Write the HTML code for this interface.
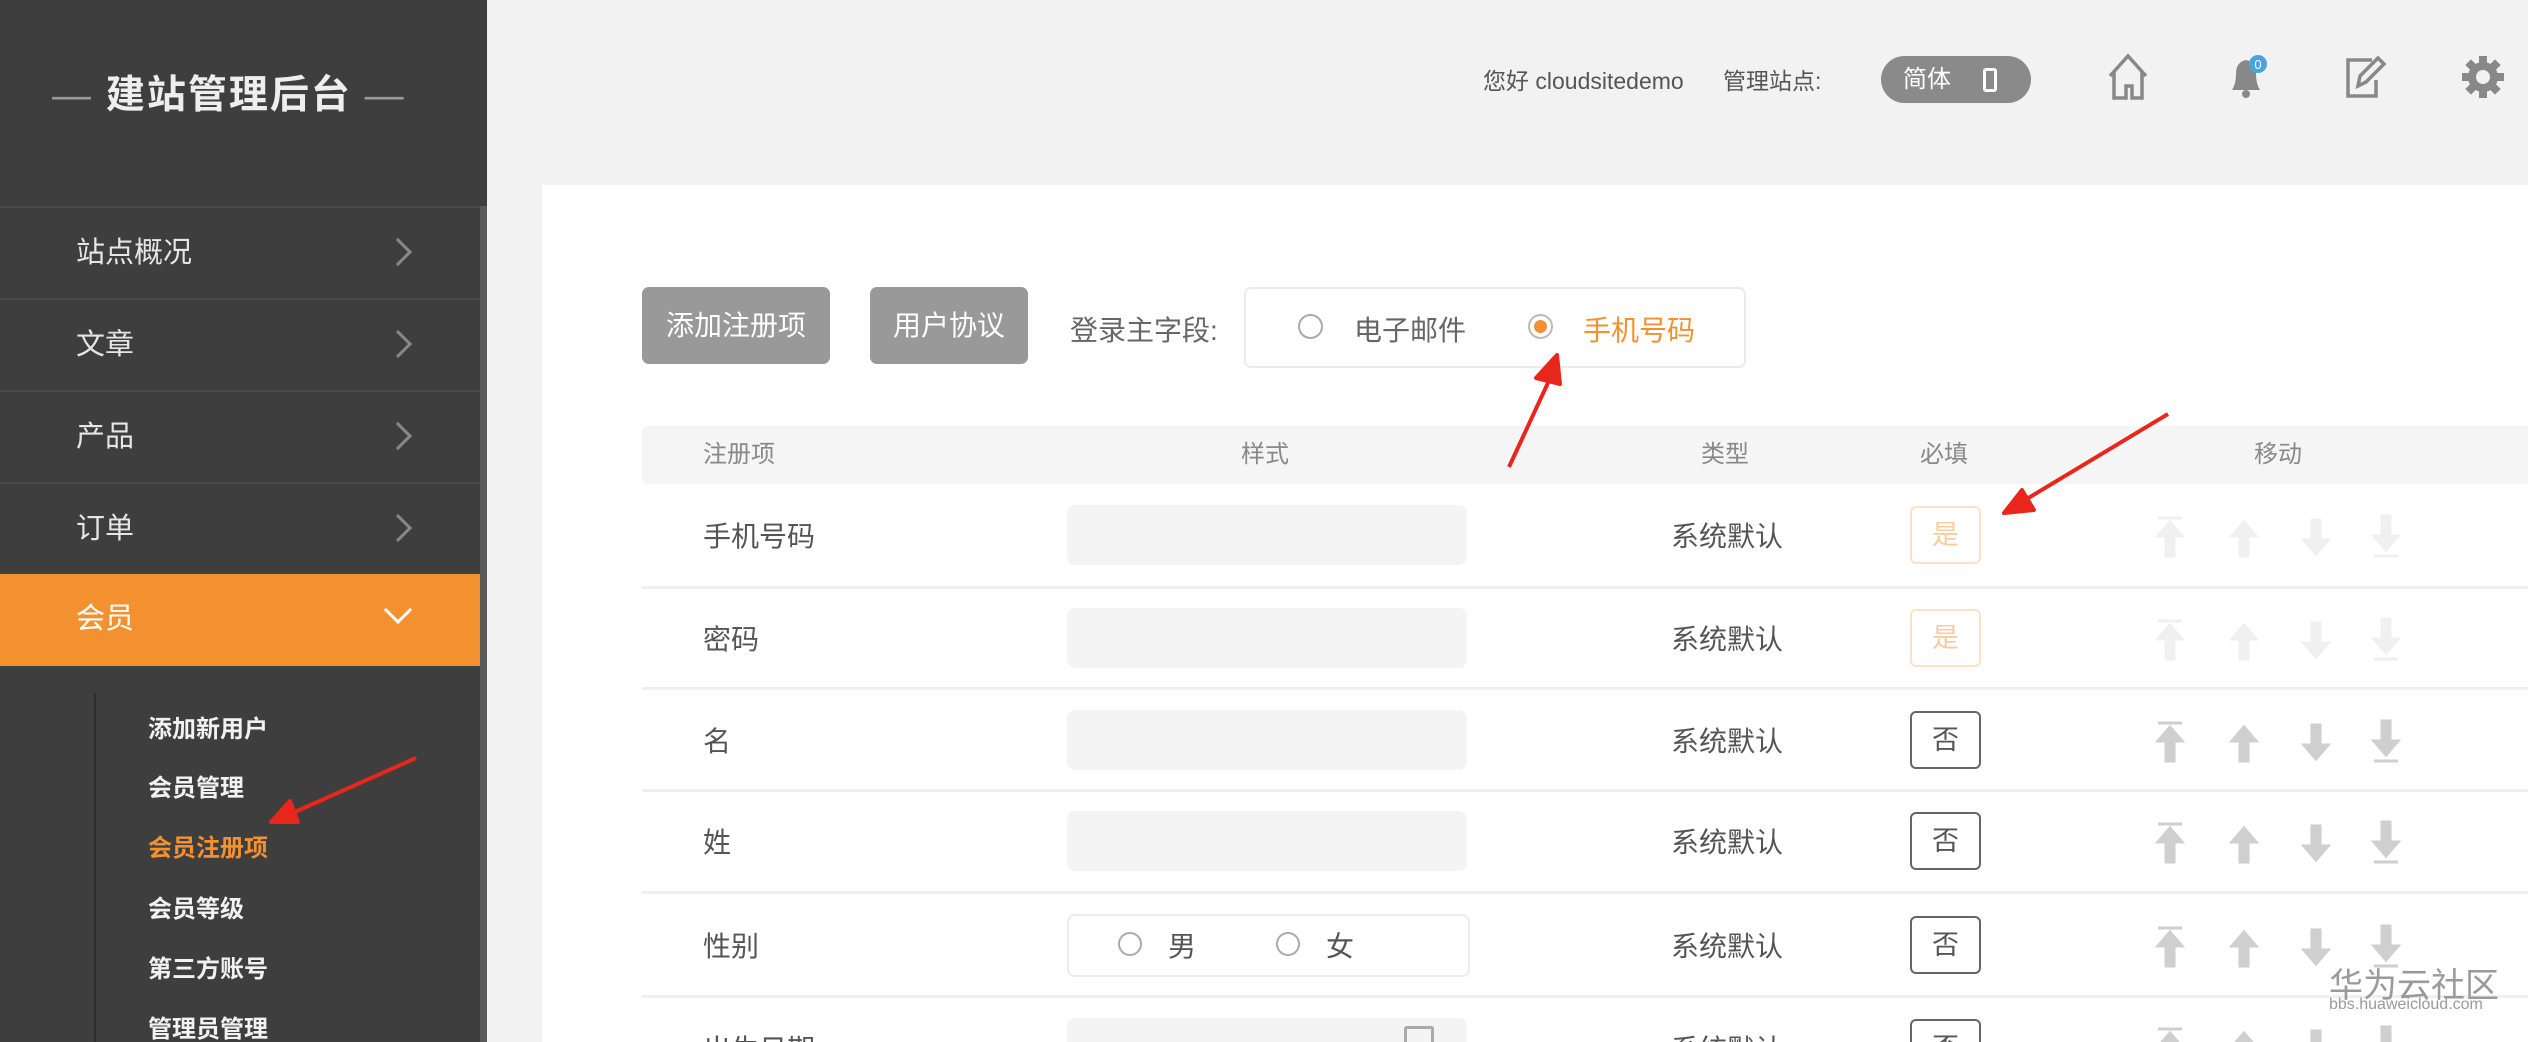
<!DOCTYPE html>
<html style="overflow:hidden;height:1042px"><head><meta charset="utf-8"><style>
*{margin:0;padding:0;box-sizing:border-box}
body{width:2528px;height:1042px;overflow:hidden;background:#f2f2f2;font-family:"Liberation Sans","Noto Sans CJK SC",sans-serif;position:relative}
.a{position:absolute;white-space:nowrap}
#side{position:absolute;left:0;top:0;width:487px;height:1042px;background:#3e3e3e}
.nav{position:absolute;left:0;width:480px;height:92px;border-top:2px solid #4a4a4a;color:#e6e6e6;font-size:29px;line-height:90px;padding-left:76px}
.nav .ch{position:absolute;left:388px;top:34px;width:20px;height:20px;border-right:3px solid #888;border-top:3px solid #888;transform:rotate(45deg)}
.sub{position:absolute;left:148px;font-size:24px;font-weight:bold;color:#f2f2f2}
.hd{position:absolute;top:426px;font-size:24px;color:#888;line-height:58px}
.lab{position:absolute;left:703px;font-size:28px;color:#555}
.fld{position:absolute;left:1067px;width:400px;height:60px;background:#f4f4f4;border-radius:8px}
.typ{position:absolute;left:1671px;font-size:28px;color:#555}
.req{position:absolute;left:1910px;width:71px;height:58px;border-radius:6px;font-size:27px;text-align:center;line-height:54px}
.sep{position:absolute;left:642px;right:0;height:3px;background:#efefef}
</style></head><body>
<div id="side">
 <div class="a" style="left:52px;top:64px;font-size:39px;font-weight:bold;color:#eee;letter-spacing:2px"><span style="color:#999;font-weight:normal">—</span> 建站管理后台 <span style="color:#999;font-weight:normal">—</span></div>
 <div class="nav" style="top:206px">站点概况<i class="ch"></i></div>
 <div class="nav" style="top:298px">文章<i class="ch"></i></div>
 <div class="nav" style="top:390px">产品<i class="ch"></i></div>
 <div class="nav" style="top:482px">订单<i class="ch"></i></div>
 <div class="nav" style="top:574px;background:#f39130;border-top:0;color:#fff;width:487px">会员<i class="ch" style="transform:rotate(135deg);top:26px;border-color:#fff"></i></div>
 <div class="a" style="left:94px;top:693px;width:2px;height:349px;background:#2e2e2e"></div>
 <div class="sub" style="top:709px">添加新用户</div>
 <div class="sub" style="top:768px">会员管理</div>
 <div class="sub" style="top:828px;color:#f39130">会员注册项</div>
 <div class="sub" style="top:889px">会员等级</div>
 <div class="sub" style="top:949px">第三方账号</div>
 <div class="sub" style="top:1009px">管理员管理</div>
 <div class="a" style="left:480px;top:206px;width:7px;height:836px;background:#5a5a5a"></div>
</div>
<!-- header -->
<div class="a" style="left:1483px;top:62px;font-size:23px;color:#555">您好 cloudsitedemo</div>
<div class="a" style="left:1723px;top:62px;font-size:23px;color:#555">管理站点:</div>
<div class="a" style="left:1881px;top:56px;width:150px;height:47px;border-radius:24px;background:#8a8a8a;color:#fff;font-size:24px;line-height:47px;padding-left:22px">简体<span style="position:absolute;left:102px;top:12px;width:14px;height:24px;border:3px solid #fff;border-radius:3px"></span></div>
<svg class="a" style="left:2104px;top:52px" width="48" height="50" viewBox="0 0 48 50"><path d="M6 24 L24 4 L42 24 M10 20 V46 H22 V34 H28 V46 H38 V20" fill="none" stroke="#888" stroke-width="3.5"/></svg>
<svg class="a" style="left:2222px;top:50px" width="52" height="52" viewBox="0 0 52 52"><path d="M10 40 Q14 34 14 24 Q14 12 24 10 Q34 12 34 24 Q34 34 38 40 Z" fill="#888"/><circle cx="24" cy="44" r="4" fill="#888"/><circle cx="36" cy="14" r="9" fill="#4aa3df"/><text x="36" y="19" font-size="13" fill="#fff" text-anchor="middle" font-family="Liberation Sans">0</text></svg>
<svg class="a" style="left:2342px;top:54px" width="46" height="48" viewBox="0 0 46 48"><path d="M30 6 H6 V42 H34 V26 M16 32 L18 22 L36 4 L42 10 L24 28 Z" fill="none" stroke="#888" stroke-width="3.5"/></svg>
<svg class="a" style="left:2460px;top:54px" width="46" height="46" viewBox="0 0 46 46"><g fill="#888"><circle cx="23" cy="23" r="15"/><rect x="19" y="2" width="8" height="42"/><rect x="2" y="19" width="42" height="8"/><rect x="19" y="2" width="8" height="42" transform="rotate(45 23 23)"/><rect x="19" y="2" width="8" height="42" transform="rotate(-45 23 23)"/></g><circle cx="23" cy="23" r="7" fill="#f2f2f2"/></svg>
<!-- card -->
<div class="a" style="left:542px;top:185px;right:0;bottom:0;background:#fff"></div>
<div class="a" style="left:642px;top:287px;width:188px;height:77px;background:#999;border-radius:7px;color:#fff;font-size:28px;line-height:77px;text-align:center">添加注册项</div>
<div class="a" style="left:870px;top:287px;width:158px;height:77px;background:#999;border-radius:7px;color:#fff;font-size:28px;line-height:77px;text-align:center">用户协议</div>
<div class="a" style="left:1070px;top:309px;font-size:28px;color:#666">登录主字段:</div>
<div class="a" style="left:1244px;top:287px;width:502px;height:81px;border:2px solid #ebebeb;border-radius:7px"></div>
<div class="a" style="left:1298px;top:314px;width:25px;height:25px;border:2px solid #aaa;border-radius:50%"></div>
<div class="a" style="left:1354px;top:309px;font-size:28px;color:#666">电子邮件</div>
<div class="a" style="left:1528px;top:314px;width:25px;height:25px;border:2px solid #bbb;border-radius:50%"><div style="margin:4px;width:13px;height:13px;border-radius:50%;background:#f39130"></div></div>
<div class="a" style="left:1583px;top:309px;font-size:28px;color:#f39130">手机号码</div>
<!-- table header -->
<div class="a" style="left:642px;top:426px;right:0;height:58px;background:#f5f5f5;border-radius:6px 0 0 6px"></div>
<div class="hd" style="left:703px">注册项</div>
<div class="hd" style="left:1241px">样式</div>
<div class="hd" style="left:1701px">类型</div>
<div class="hd" style="left:1920px">必填</div>
<div class="hd" style="left:2254px">移动</div>
<!-- rows -->
<div class="lab" style="top:515px">手机号码</div><div class="fld" style="top:505px"></div><div class="typ" style="top:515px">系统默认</div><div class="req" style="top:506px;border:2px solid #fbe2c6;color:#f8cc9c">是</div>
<div class="sep" style="top:586px"></div>
<div class="lab" style="top:618px">密码</div><div class="fld" style="top:608px"></div><div class="typ" style="top:618px">系统默认</div><div class="req" style="top:609px;border:2px solid #fbe2c6;color:#f8cc9c">是</div>
<div class="sep" style="top:687px"></div>
<div class="lab" style="top:720px">名</div><div class="fld" style="top:710px"></div><div class="typ" style="top:720px">系统默认</div><div class="req" style="top:711px;border:2px solid #666;color:#555">否</div>
<div class="sep" style="top:789px"></div>
<div class="lab" style="top:821px">姓</div><div class="fld" style="top:811px"></div><div class="typ" style="top:821px">系统默认</div><div class="req" style="top:812px;border:2px solid #666;color:#555">否</div>
<div class="sep" style="top:891px"></div>
<div class="lab" style="top:925px">性别</div>
<div class="a" style="left:1067px;top:914px;width:403px;height:63px;border:2px solid #ececec;border-radius:8px"></div>
<div class="a" style="left:1118px;top:932px;width:24px;height:24px;border:2px solid #aaa;border-radius:50%"></div><div class="a" style="left:1168px;top:925px;font-size:28px;color:#555">男</div>
<div class="a" style="left:1276px;top:932px;width:24px;height:24px;border:2px solid #aaa;border-radius:50%"></div><div class="a" style="left:1326px;top:925px;font-size:28px;color:#555">女</div>
<div class="typ" style="top:925px">系统默认</div><div class="req" style="top:916px;border:2px solid #666;color:#555">否</div>
<div class="sep" style="top:995px"></div>
<div class="lab" style="top:1028px">出生日期</div><div class="fld" style="top:1018px"></div><div class="typ" style="top:1028px">系统默认</div><div class="req" style="top:1019px;border:2px solid #666;color:#555">否</div>
<div class="a" style="left:1404px;top:1026px;width:30px;height:16px;border:3px solid #aaa;border-bottom:0;border-radius:3px 3px 0 0"></div>
<!-- move arrows -->
<svg class="a" style="left:2150px;top:500px" width="260" height="542" viewBox="0 0 260 542">
<defs>
<g id="ar"><path d="M8 6 H32 M20 10 L8 24 H16 V44 H24 V24 H32 Z" /><path d="M94 10 L82 24 H90 V44 H98 V24 H106 Z"/><path d="M166 42 L154 28 H162 V8 H170 V28 H178 Z"/><path d="M236 38 L224 24 H232 V4 H240 V24 H248 Z M224 44 H248"/></g>
</defs>
<g fill="#f0f0f0" stroke="#f0f0f0" stroke-width="3"><use href="#ar" y="12"/><use href="#ar" y="115"/></g>
<g fill="#cfcfcf" stroke="#cfcfcf" stroke-width="3"><use href="#ar" y="217"/><use href="#ar" y="318"/><use href="#ar" y="422"/><use href="#ar" y="523"/></g>
</svg>
<!-- watermark -->
<div class="a" style="left:2329px;top:958px;font-size:34px;color:#9a9a9a">华为云社区</div>
<div class="a" style="left:2329px;top:996px;font-size:16px;color:#9a9a9a">bbs.huaweicloud.com</div>
<!-- red arrows -->
<svg class="a" style="left:0;top:0" width="2528" height="1042">
<g fill="#e8261c" stroke="#e8261c" stroke-width="4" stroke-linejoin="round">
<path d="M1509 467 L1553 372" fill="none"/><path d="M1557 355 L1536 378 L1560 384 Z"/>
<path d="M2168 414 L2020 503" fill="none"/><path d="M2004 513 L2022 490 L2034 510 Z"/>
<path d="M416 758 L288 815" fill="none"/><path d="M271 822 L290 801 L298 822 Z"/>
</g></svg>
</body></html>
